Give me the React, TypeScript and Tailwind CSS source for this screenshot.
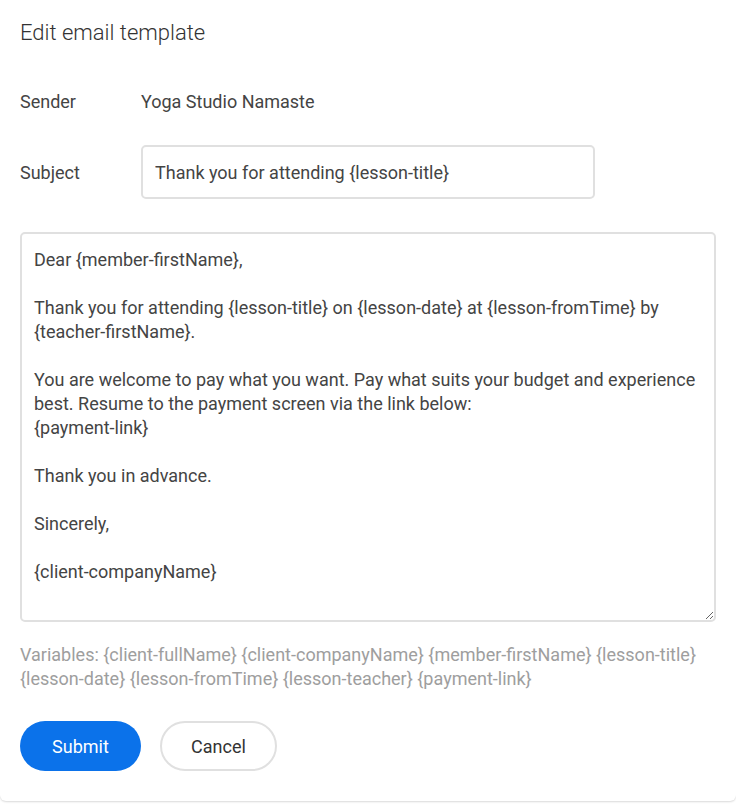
import React, {useState} from 'react';

const TEMPLATE_BODY = `Dear {member-firstName},

Thank you for attending {lesson-title} on {lesson-date} at {lesson-fromTime} by {teacher-firstName}.

You are welcome to pay what you want. Pay what suits your budget and experience best. Resume to the payment screen via the link below:
{payment-link}

Thank you in advance.

Sincerely,

{client-companyName}`;

const VARIABLES = [
    '{client-fullName}',
    '{client-companyName}',
    '{member-firstName}',
    '{lesson-title}',
    '{lesson-date}',
    '{lesson-fromTime}',
    '{lesson-teacher}',
    '{payment-link}',
];

export default function App() {
    const [subject, setSubject] = useState('Thank you for attending {lesson-title}');
    const [body, setBody] = useState(TEMPLATE_BODY);

    return (
        <div className="w-[736px] h-[804px] bg-white font-['Roboto',sans-serif] text-[#444]">
            <form
                onSubmit={(e) => e.preventDefault()}
                className="h-[801px] rounded-b-md bg-white shadow-[0_1px_2px_rgba(0,0,0,0.15)] px-5 pt-[19px]"
            >
                <h2 className="text-[22px] leading-7 font-light text-[#333]">Edit email template</h2>

                <div className="flex items-center mt-[42px] h-6 text-[18px]">
                    <span className="w-[121px]">Sender</span>
                    <span>Yoga Studio Namaste</span>
                </div>

                <div className="flex items-center mt-[32px]">
                    <label htmlFor="subject" className="w-[121px] text-[18px]">Subject</label>
                    <input
                        id="subject"
                        value={subject}
                        onChange={(e) => setSubject(e.target.value)}
                        className="w-[454px] h-[54px] rounded-[5px] border-2 border-[#e0e0e0] px-3 text-[18px] text-[#444] outline-none"
                    />
                </div>

                <textarea
                    value={body}
                    onChange={(e) => setBody(e.target.value)}
                    className="block mt-[33px] w-[696px] h-[390px] rounded-[5px] border-2 border-[#e0e0e0] px-3 pt-[14px] text-[18px] leading-6 text-[#444] outline-none"
                />

                <p className="mt-[21px] text-[18px] leading-6 text-[#9e9e9e]">
                    Variables:{' '}
                    {VARIABLES.map((v, i) => (
                        <React.Fragment key={v}>
                            <span className="whitespace-nowrap">{v}</span>
                            {i < VARIABLES.length - 1 ? ' ' : ''}
                        </React.Fragment>
                    ))}
                </p>

                <div className="flex gap-[19px] mt-[30px]">
                    <button
                        type="submit"
                        className="w-[121px] h-[50px] rounded-full bg-[#0b72ea] text-white text-[18px]"
                    >
                        Submit
                    </button>
                    <button
                        type="button"
                        className="w-[117px] h-[50px] rounded-full border-2 border-[#e0e0e0] bg-white text-[18px] text-[#333]"
                    >
                        Cancel
                    </button>
                </div>
            </form>
        </div>
    );
}
